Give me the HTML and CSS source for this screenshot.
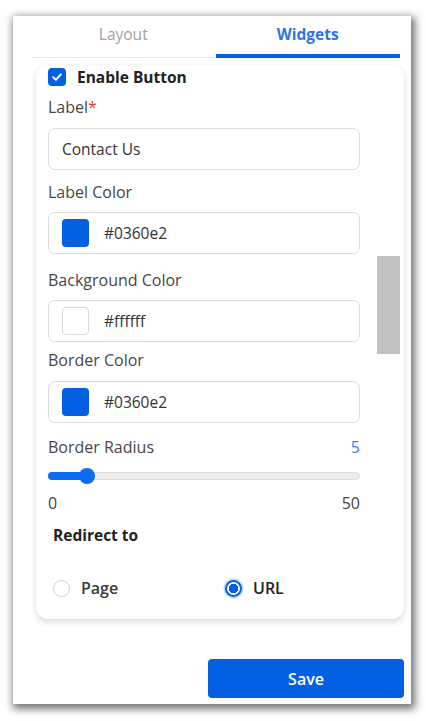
FILE: index.html
```html
<!DOCTYPE html>
<html lang="en">
<head>
<meta charset="utf-8">
<title>Widgets</title>
<link rel="stylesheet" href="styles.css">
</head>
<body>
<div class="panel">
  <div class="tabs">
    <div class="tab">Layout</div>
    <div class="tab tab-active">Widgets</div>
  </div>
  <div class="scroll">
    <div class="card">
      <div class="check-row">
        <span class="checkbox">
          <svg width="12" height="12" viewBox="0 0 12 12"><path d="M2.2 6.3 L4.9 8.8 L9.8 3.4" fill="none" stroke="#fff" stroke-width="2" stroke-linecap="round" stroke-linejoin="round"/></svg>
        </span>
        <span class="check-label">Enable Button</span>
      </div>
      <div class="label mt-8">Label<span class="req">*</span></div>
      <div class="input mt-11">Contact Us</div>
      <div class="label mt-12">Label Color</div>
      <div class="input color-input mt-10"><span class="swatch swatch-blue"></span><span>#0360e2</span></div>
      <div class="label mt-16">Background Color</div>
      <div class="input color-input mt-10"><span class="swatch swatch-white"></span><span>#ffffff</span></div>
      <div class="label mt-8">Border Color</div>
      <div class="input color-input mt-11"><span class="swatch swatch-blue"></span><span>#0360e2</span></div>
      <div class="label-row mt-14"><span class="label">Border Radius</span><span class="value">5</span></div>
      <div class="slider mt-11">
        <div class="track"><div class="fill"></div><div class="thumb"></div></div>
      </div>
      <div class="range-row mt-9"><span>0</span><span>50</span></div>
      <div class="section-title mt-12">Redirect to</div>
      <div class="radio-row">
        <label class="radio"><span class="radio-dot"></span><span class="radio-text">Page</span></label>
        <label class="radio radio-on"><span class="radio-dot"></span><span class="radio-text">URL</span></label>
      </div>
    </div>
  </div>
  <div class="footer">
    <button class="save">Save</button>
  </div>
  <div class="scroll-thumb"></div>
</div>
</body>
</html>
```

FILE: styles.css
```css
* { box-sizing: border-box; }
html, body { margin: 0; padding: 0; background: #fff; }
body {
  font-family: "Open Sans", "Noto Sans", sans-serif;
  color: #444;
  width: 426px;
  height: 721px;
  overflow: hidden;
}
.panel {
  position: relative;
  margin: 16px 0 0 13px;
  width: 398px;
  height: 688px;
  background: #fff;
  box-shadow: 2px 3px 8px 2px rgba(0,0,0,0.55);
  display: flex;
  flex-direction: column;
}
.tabs {
  display: flex;
  padding: 0 11px 0 18px;
  height: 42px;
}
.tab {
  flex: 1;
  display: flex;
  align-items: center;
  justify-content: center;
  font-size: 15.5px;
  color: #a0a0a0;
  border-bottom: 1px solid #e6e6e6;
  padding-bottom: 6px;
}
.tab-active {
  color: #2f74e0;
  font-weight: 700;
  border-bottom: 4px solid #0360e2;
  padding-bottom: 3px;
}
.scroll {
  flex: 1;
  padding: 7px 7px 0 23px;
  overflow: hidden;
}
.card {
  background: #fff;
  border-radius: 12px;
  box-shadow: 0 3px 6px rgba(0,0,0,0.14), 0 0 1px rgba(0,0,0,0.08);
  padding: 0 44px 21px 12px;
}
.check-row {
  height: 24px;
  display: flex;
  align-items: center;
  gap: 11px;
}
.checkbox {
  width: 18px;
  height: 18px;
  border-radius: 4px;
  background: #0360e2;
  display: flex;
  align-items: center;
  justify-content: center;
}
.check-label {
  font-size: 15.5px;
  font-weight: 700;
  color: #222;
}
.label {
  font-size: 16px;
  line-height: 20px;
  color: #474747;
}
.req { color: #e53935; }
.input {
  height: 42px;
  border: 1px solid #dcdcdc;
  border-radius: 7px;
  display: flex;
  align-items: center;
  padding: 0 13px;
  font-size: 15.5px;
  color: #333;
}
.color-input { gap: 15px; }
.swatch {
  width: 27px;
  height: 28px;
  border-radius: 4px;
}
.swatch-blue { background: #0360e2; }
.swatch-white { background: #fff; border: 1px solid #d8d8d8; }
.label-row {
  display: flex;
  justify-content: space-between;
  align-items: center;
}
.value {
  font-size: 16px;
  line-height: 20px;
  color: #3b7ee2;
}
.slider {
  height: 16px;
  display: flex;
  align-items: center;
}
.track {
  position: relative;
  width: 100%;
  height: 8px;
  border-radius: 4px;
  background: #ececec;
  border: 1px solid #dedede;
}
.fill {
  position: absolute;
  left: -1px;
  top: -1px;
  height: 8px;
  width: 40px;
  border-radius: 4px;
  background: #0a6cf0;
}
.thumb {
  position: absolute;
  left: 30px;
  top: -5px;
  width: 16px;
  height: 16px;
  border-radius: 50%;
  background: #0a6cf0;
}
.range-row {
  display: flex;
  justify-content: space-between;
  font-size: 16px;
  line-height: 20px;
  color: #444;
}
.section-title {
  font-size: 15.5px;
  line-height: 20px;
  font-weight: 700;
  color: #222;
  padding-left: 5px;
}
.radio-row {
  margin-top: 33px;
  display: flex;
  height: 20px;
  padding-left: 5px;
}
.radio {
  display: flex;
  align-items: center;
  gap: 11px;
}
.radio:first-child { flex: 0 0 172px; }
.radio-dot {
  width: 17px;
  height: 17px;
  border-radius: 50%;
  border: 1px solid #d0d0d0;
  background: #fff;
}
.radio-on .radio-dot {
  border: 2px solid #0360e2;
  background: radial-gradient(circle, #0360e2 0 4.5px, #fff 5px);
  box-shadow: 0 0 0 1.5px rgba(3,96,226,0.25);
}
.radio-text {
  font-size: 16px;
  font-weight: 600;
  color: #3a3a3a;
}
.radio-on .radio-text { color: #222; }
.footer {
  display: flex;
  justify-content: flex-end;
  padding: 0 7px 6px 0;
}
.save {
  width: 196px;
  height: 39px;
  border: none;
  border-radius: 4px;
  background: #0360e2;
  color: #fff;
  font-family: "Open Sans", "Noto Sans", sans-serif;
  font-size: 16px;
  font-weight: 600;
}
.mt-8 { margin-top: 8px; }
.mt-9 { margin-top: 9px; }
.mt-10 { margin-top: 10px; }
.mt-11 { margin-top: 11px; }
.mt-12 { margin-top: 12px; }
.mt-14 { margin-top: 14px; }
.mt-16 { margin-top: 16px; }
.scroll-thumb {
  position: absolute;
  left: 364px;
  top: 240px;
  width: 23px;
  height: 98px;
  background: #c1c1c1;
}
```
